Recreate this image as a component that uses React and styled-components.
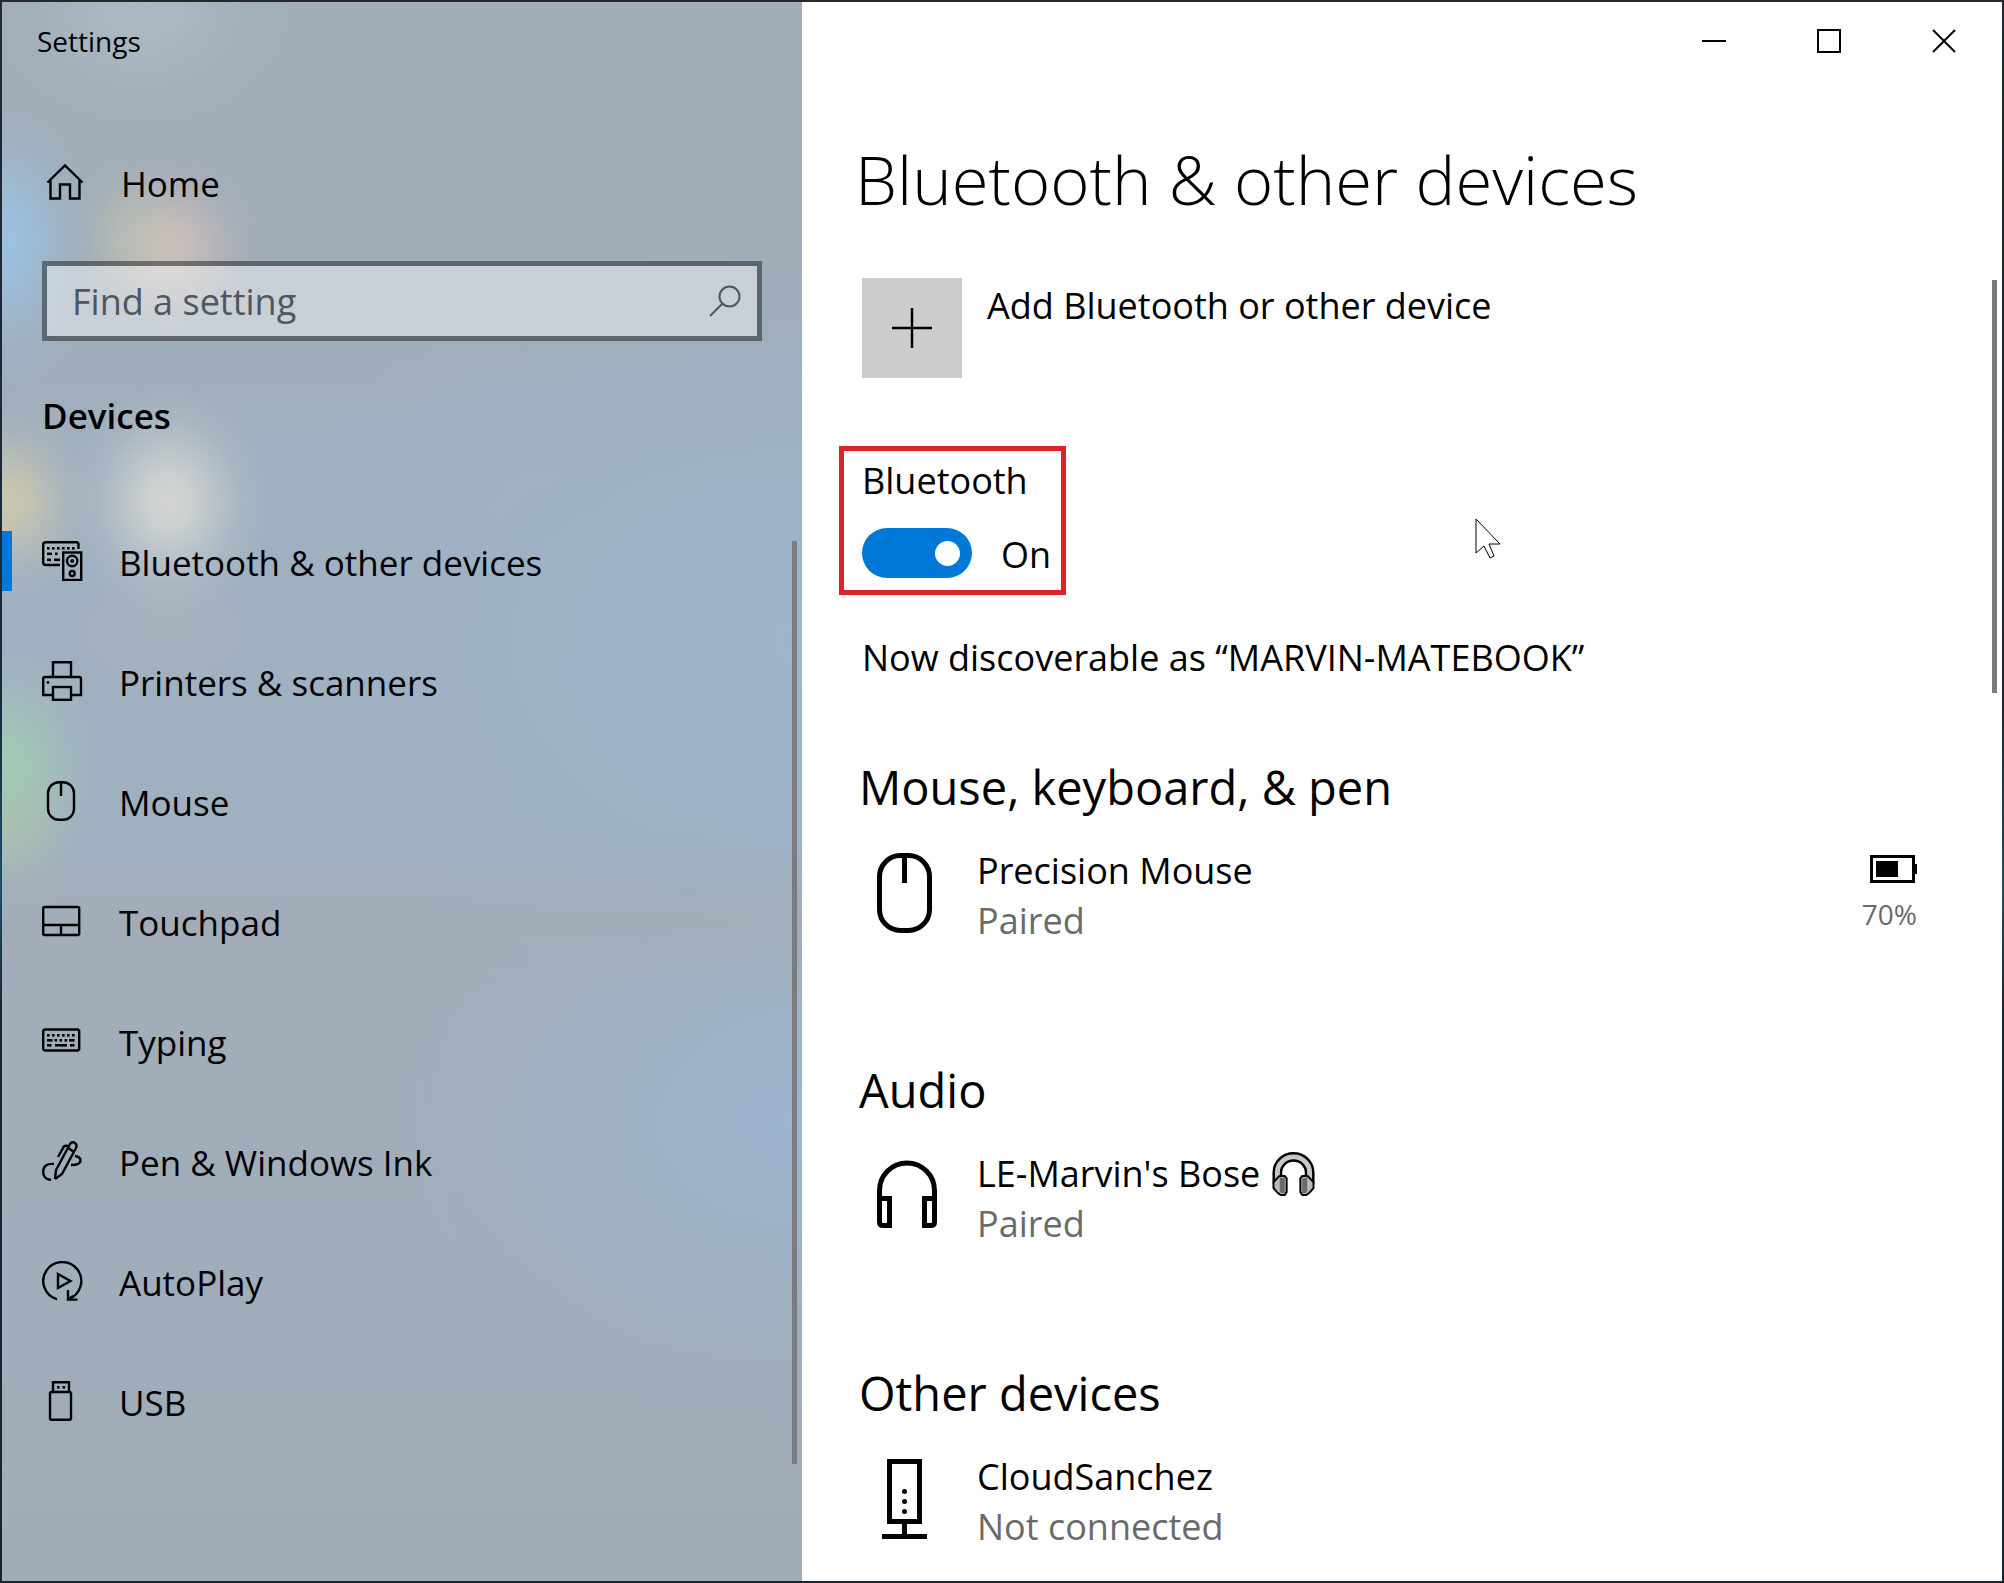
import React, { useState } from "react";
import styled, { createGlobalStyle } from "styled-components";

const GlobalStyle = createGlobalStyle`
  *, *::before, *::after { box-sizing: border-box; }
  body {
    margin: 0;
    font-family: "Open Sans", "Noto Sans", sans-serif;
    font-size: 36px;
    line-height: 50px;
    color: #000;
  }
  h1, h2, p, ul { margin: 0; padding: 0; font-weight: 400; }
  button, input { font: inherit; color: inherit; }
`;

/* ---------- window ---------- */

const Desktop = styled.div`
  min-height: 100vh;
  padding: 2px;
  display: grid;
  background: linear-gradient(#26282c, #1c2836 4%, #1b2a3a 45%, #1d4f66 56%, #1a2532 64%, #1a2532);
`;

const Window = styled.div`
  display: grid;
  grid-template-columns: 40% 1fr;
  background: #fff;
`;

/* ---------- sidebar ---------- */

/* A soft spot of desktop colour showing through the acrylic pane. */
const glow = (size, at, rgb, alpha) =>
  `radial-gradient(ellipse ${size} at ${at}, rgba(${rgb}, ${alpha}), rgba(${rgb}, ${alpha * 0.85}) 22%, rgba(${rgb}, ${alpha * 0.5}) 46%, rgba(${rgb}, ${alpha * 0.18}) 70%, rgba(${rgb}, 0))`;

const Sidebar = styled.aside`
  display: flex;
  flex-direction: column;
  padding-top: 21px;
  background:
    ${glow("100px 150px", "0 240px", "156, 198, 232", 0.85)},
    ${glow("60px 90px", "125px 235px", "190, 198, 176", 0.4)},
    ${glow("95px 95px", "168px 245px", "214, 196, 186", 0.8)},
    ${glow("100px 120px", "167px 500px", "216, 217, 212", 0.9)},
    ${glow("90px 100px", "5px 500px", "210, 203, 172", 0.85)},
    ${glow("95px 120px", "5px 758px", "164, 205, 180", 0.85)},
    ${glow("85px 90px", "5px 825px", "182, 200, 162", 0.5)},
    ${glow("150px 120px", "140px 10px", "182, 193, 204", 0.6)},
    ${glow("130px 80px", "160px 630px", "176, 178, 188", 0.5)},
    linear-gradient(rgba(162, 172, 183, 0), rgba(162, 172, 183, 0.8) 50%, rgba(162, 172, 183, 0)) 0 845px / 100% 150px no-repeat,
    ${glow("560px 420px", "100% 640px", "157, 181, 204", 0.9)},
    ${glow("420px 300px", "100% 1120px", "156, 181, 206", 0.95)},
    linear-gradient(#a1adb8, #a0acb8 18%, #a0b0c0 30%, #9fb0c1 52%, #a1adb9 62%, #a0adba 85%, #a1abb6);
`;

const AppName = styled.p`
  padding-left: 35px;
  font-size: 28px;
  line-height: 36px;
`;

const HomeLink = styled.a`
  display: flex;
  align-items: center;
  gap: 35px;
  height: 80px;
  margin: 83px 40px 0;
  padding-left: 2px;
  color: inherit;
  text-decoration: none;
`;

const LinkText = styled.span`
  padding-top: 4px;
  font-size: 35px;
`;

const SearchBox = styled.form`
  display: flex;
  align-items: center;
  height: 80px;
  margin: 39px 40px 0;
  padding: 0 16px 0 25px;
  border: 5px solid rgba(0, 0, 0, 0.42);
  background: rgba(255, 255, 255, 0.42);
  background-clip: padding-box;
`;

const SearchInput = styled.input`
  flex: 1;
  min-width: 0;
  padding: 2px 0 0;
  border: 0;
  outline: 0;
  background: transparent;
  &::placeholder { color: #50565e; opacity: 1; }
`;

const PlainButton = styled.button`
  display: grid;
  place-items: center;
  padding: 0;
  border: 0;
  background: transparent;
`;

const GroupName = styled.h2`
  margin-top: 50px;
  padding-left: 40px;
  font-size: 35px;
  font-weight: 600;
`;

const NavArea = styled.nav`
  display: grid;
  grid-template-columns: 1fr 5px;
  margin: 60px 5px 0 0;
`;

const NavList = styled.ul`
  list-style: none;
`;

const NavLink = styled.a`
  display: flex;
  align-items: center;
  gap: 35px;
  height: 120px;
  color: inherit;
  text-decoration: none;
  &::before {
    content: "";
    width: 10px;
    height: 60px;
    margin-right: -5px;
    background: ${(p) => (p.$active ? "#0078d7" : "transparent")};
  }
`;

const Thumb = styled.div`
  height: ${(p) => p.$length}px;
  margin-top: ${(p) => p.$start}px;
  background: #7a7c80;
`;

/* ---------- main pane ---------- */

const Main = styled.main`
  display: flex;
  flex-direction: column;
  min-width: 0;
`;

const CaptionBar = styled.div`
  display: flex;
  justify-content: flex-end;
  padding-right: 1px;
`;

const CaptionButton = styled(PlainButton)`
  width: 115px;
  height: 78px;
`;

const PageTitle = styled.h1`
  margin-top: 55px;
  padding-left: 53px;
  font-size: 67px;
  line-height: 88px;
  font-weight: 300;
`;

const ScrollArea = styled.div`
  display: grid;
  grid-template-columns: 1fr 5px;
  margin: 55px 5px 0 0;
`;

const Content = styled.div`
  display: flex;
  flex-direction: column;
  align-items: flex-start;
  padding: 0 75px 28px 60px;
`;

const AddDevice = styled.button`
  display: flex;
  align-items: flex-start;
  gap: 25px;
  padding: 0;
  border: 0;
  background: transparent;
  text-align: left;
`;

const AddLabel = styled.span`
  padding-top: 3px;
`;

const PlusTile = styled.span`
  display: grid;
  place-items: center;
  width: 100px;
  height: 100px;
  background: #ccc;
`;

const Highlight = styled.div`
  margin: 68px 0 0 -23px;
  padding: 5px 10px 12px 18px;
  border: 5px solid #dc2329;
`;

const SwitchRow = styled.div`
  display: flex;
  align-items: center;
  gap: 29px;
  margin-top: 22px;
`;

const SwitchState = styled.span`
  padding-top: 4px;
  line-height: 46px;
`;

const Switch = styled.input`
  appearance: none;
  display: flex;
  align-items: center;
  justify-content: ${(p) => (p.checked ? "flex-end" : "flex-start")};
  width: 110px;
  height: 50px;
  margin: 0;
  padding: 0 12px;
  border-radius: 25px;
  background: ${(p) => (p.checked ? "#0078d7" : "#777")};
  &::before {
    content: "";
    width: 25px;
    height: 25px;
    border-radius: 50%;
    background: #fff;
  }
`;

const Discoverable = styled.p`
  margin: 38px 0 72px;
`;

const Section = styled.section`
  align-self: stretch;
  & + & { margin-top: 112px; }
`;

const SectionTitle = styled.h2`
  margin-left: -3px;
  font-size: 47px;
  line-height: 64px;
`;

const Device = styled.div`
  display: flex;
  align-items: flex-start;
  gap: 31px;
  margin-top: 27px;
`;

const DeviceIcon = styled.svg`
  margin-top: 7px;
  fill: none;
  stroke: #000;
  stroke-width: 5;
`;

const DeviceInfo = styled.div`
  flex: 1;
`;

const DeviceName = styled.p`
  display: flex;
  align-items: center;
  gap: 12px;
`;

const DeviceStatus = styled.p`
  color: #6a6a6a;
`;

const Battery = styled.div`
  display: flex;
  flex-direction: column;
  align-items: flex-end;
  gap: 13px;
  padding-top: 9px;
  font-size: 28px;
  line-height: 36px;
  color: #6a6a6a;
`;

const Pointer = styled.svg`
  position: absolute;
  left: 1475px;
  top: 518px;
  pointer-events: none;
`;

/* ---------- icons ---------- */

const LineIcon = styled.svg`
  flex: none;
  fill: none;
  stroke: #000;
  stroke-width: 2.4;
`;

const Icon = ({ children }) => (
  <LineIcon width="42" height="40" viewBox="0 0 42 40" aria-hidden="true">{children}</LineIcon>
);

const Dots = ({ y, xs, w = 2.6 }) =>
  xs.map((x) => <rect key={x} x={x} y={y} width={w} height="2.6" fill="#000" stroke="none" />);

const BluetoothIcon = () => (
  <Icon>
    <path d="M36.500 8V3.500Q36.500 1.200 34.500 1.200H4Q1.200 1.200 1.200 3.500V21.500Q1.200 24 4 24H18" />
    <Dots y={6} xs={[5, 10, 15, 20, 25, 30]} />
    <Dots y={11.500} xs={[5]} w={5} />
    <Dots y={11.500} xs={[13]} />
    <Dots y={17.500} xs={[5]} w={4} />
    <Dots y={17.500} xs={[12]} w={6} />
    <rect x="21.200" y="11.500" width="18" height="27.500" />
    <circle cx="30.200" cy="20" r="5.200" />
    <circle cx="30.200" cy="20" r="0.800" />
    <circle cx="30.200" cy="32.500" r="2.500" />
  </Icon>
);

const PrinterIcon = () => (
  <Icon>
    <path d="M11 16V1.200H29V16M10 34H1.200V18Q1.200 16 3 16H37Q39 16 39 18V34H29" />
    <rect x="11" y="26" width="18" height="12.800" />
    <circle cx="6" cy="21.500" r="1.400" fill="#000" stroke="none" />
  </Icon>
);

const MouseIcon = () => (
  <Icon>
    <rect x="6" y="1.200" width="26" height="37.600" rx="11" />
    <path d="M19 1V15" />
  </Icon>
);

const TouchpadIcon = () => (
  <Icon>
    <rect x="1.200" y="6" width="36" height="28" rx="1.500" />
    <path d="M1 24H37M19 24V34" />
  </Icon>
);

const TypingIcon = () => (
  <Icon>
    <rect x="1.200" y="8.500" width="36" height="21" rx="2" />
    <Dots y={13} xs={[5, 10, 15, 20, 25, 30]} />
    <Dots y={18} xs={[5, 27]} w={5.500} />
    <Dots y={18} xs={[12.500, 17.500, 22.500]} />
    <Dots y={23} xs={[5, 28]} w={4.500} />
    <Dots y={23} xs={[13]} w={12} />
  </Icon>
);

const PenIcon = () => (
  <Icon>
    <path d="M13 38L14 29L28 3Q30 0 33 2Q35.500 4 34 7L20 33L13 38M25.500 6.500L32 11" />
    <path d="M26 5Q22 4 21 7L16 16" />
    <path d="M12 23Q1.200 22 1.200 31Q1.200 38 9 39" />
    <path d="M33 15Q39 16 38.500 20Q38 24 29 24" />
  </Icon>
);

const AutoPlayIcon = () => (
  <Icon>
    <path d="M15 38.300A19 19 0 1 1 26.500 38" />
    <path d="M26 29V38.600H35.500M26.500 38.500L31 35" />
    <path d="M16 13V27L28.500 20Z" />
  </Icon>
);

const UsbIcon = () => (
  <Icon>
    <path d="M11 11V1.200H27V11" />
    <rect x="8" y="11" width="21" height="27.800" rx="1.500" />
    <Dots y={5} xs={[15, 20.500]} />
  </Icon>
);

const NAV = [
  ["Bluetooth & other devices", BluetoothIcon],
  ["Printers & scanners", PrinterIcon],
  ["Mouse", MouseIcon],
  ["Touchpad", TouchpadIcon],
  ["Typing", TypingIcon],
  ["Pen & Windows Ink", PenIcon],
  ["AutoPlay", AutoPlayIcon],
  ["USB", UsbIcon],
];

const HeadphoneEmoji = () => (
  <svg width="43" height="44" viewBox="0 0 44 45" role="img" aria-label="headphones">
    <path d="M5.500 32V21A16.500 16 0 0 1 38.500 21V32" fill="none" stroke="#000" strokeWidth="10" />
    <path d="M5.500 32V21A16.500 16 0 0 1 38.500 21V32" fill="none" stroke="#c8c8c8" strokeWidth="5" />
    <path d="M7 25L1.500 31V37L6 42L9 44H13L15 41V27L13 24.500H9Z" fill="#b8b8b8" stroke="#000" strokeWidth="2" />
    <path d="M37 25L42.500 31V37L38 42L35 44H31L29 41V27L31 24.500H35Z" fill="#b8b8b8" stroke="#000" strokeWidth="2" />
    <path d="M8 26.500H13V42H9.500L8 40ZM36 26.500H31V42H34.500L36 40Z" fill="#6a6a6a" />
  </svg>
);

const DeviceEntry = ({ icon, name, status, emoji, children }) => (
  <Device>
    <DeviceIcon width="84" height="80" viewBox="0 0 84 80" aria-hidden="true">{icon}</DeviceIcon>
    <DeviceInfo>
      <DeviceName>{name}{emoji}</DeviceName>
      <DeviceStatus>{status}</DeviceStatus>
    </DeviceInfo>
    {children}
  </Device>
);

export default function App() {
  const [on, setOn] = useState(true);
  return (
    <Desktop>
      <GlobalStyle />
      <Window>
        <Sidebar>
          <AppName>Settings</AppName>
          <HomeLink href="#home">
            <LineIcon width="42" height="40" viewBox="0 0 42 40" aria-hidden="true">
              <path d="M3.500 20.500L21 3.500L38.500 20.500M6.500 18V36.500H16V22.500H26V36.500H35.500V18" />
            </LineIcon>
            <LinkText>Home</LinkText>
          </HomeLink>
          <SearchBox role="search" onSubmit={(e) => e.preventDefault()}>
            <SearchInput type="text" placeholder="Find a setting" aria-label="Find a setting" />
            <PlainButton type="submit" aria-label="Search">
              <svg width="32" height="32" viewBox="0 0 32 32" fill="none" stroke="#50565e" strokeWidth="2">
                <circle cx="20.500" cy="11.500" r="10" />
                <path d="M13.500 18.500L1 31" />
              </svg>
            </PlainButton>
          </SearchBox>
          <GroupName>Devices</GroupName>
          <NavArea aria-label="Devices">
            <NavList>
              {NAV.map(([label, Glyph], i) => (
                <li key={label}>
                  <NavLink href={`#${i}`} $active={i === 0} aria-current={i === 0 ? "page" : undefined}>
                    <Glyph />
                    <LinkText>{label}</LinkText>
                  </NavLink>
                </li>
              ))}
            </NavList>
            <Thumb $start={40} $length={923} />
          </NavArea>
        </Sidebar>
        <Main>
          <CaptionBar>
            <CaptionButton aria-label="Minimize">
              <svg width="24" height="24"><path d="M0 12H24" stroke="#000" strokeWidth="2" /></svg>
            </CaptionButton>
            <CaptionButton aria-label="Maximize">
              <svg width="24" height="24"><path d="M1 1H23V23H1Z" fill="none" stroke="#000" strokeWidth="2" /></svg>
            </CaptionButton>
            <CaptionButton aria-label="Close">
              <svg width="24" height="24"><path d="M1 1L23 23M23 1L1 23" stroke="#000" strokeWidth="2" /></svg>
            </CaptionButton>
          </CaptionBar>
          <PageTitle>Bluetooth &amp; other devices</PageTitle>
          <ScrollArea>
            <Content>
              <AddDevice>
                <PlusTile>
                  <svg width="40" height="40"><path d="M20 0V40M0 20H40" stroke="#000" strokeWidth="2.500" /></svg>
                </PlusTile>
                <AddLabel>Add Bluetooth or other device</AddLabel>
              </AddDevice>
              <Highlight>
                <label htmlFor="bluetooth">Bluetooth</label>
                <SwitchRow>
                  <Switch id="bluetooth" type="checkbox" role="switch" checked={on} onChange={() => setOn(!on)} />
                  <SwitchState>{on ? "On" : "Off"}</SwitchState>
                </SwitchRow>
              </Highlight>
              <Discoverable>Now discoverable as “MARVIN-MATEBOOK”</Discoverable>
              <Section>
                <SectionTitle>Mouse, keyboard, &amp; pen</SectionTitle>
                <DeviceEntry
                  name="Precision Mouse"
                  status="Paired"
                  icon={<><rect x="17.500" y="2.500" width="50" height="75" rx="21" /><path d="M42.500 2V30" /></>}
                >
                  <Battery>
                    <svg width="48" height="28" viewBox="0 0 48 28" aria-hidden="true">
                      <path d="M2.500 1.500H44.500V26.500H2.500Z" fill="none" stroke="#000" strokeWidth="3" />
                      <path d="M7 6H29V22H7ZM45 9H48V19H45Z" fill="#000" />
                    </svg>
                    <span>70%</span>
                  </Battery>
                </DeviceEntry>
              </Section>
              <Section>
                <SectionTitle>Audio</SectionTitle>
                <DeviceEntry
                  name="LE-Marvin's Bose"
                  status="Paired"
                  emoji={<HeadphoneEmoji />}
                  icon={
                    <>
                      <path d="M17.500 46V34.500A27.500 27.500 0 0 1 72.500 34.500V46" />
                      <path d="M17.500 42.500H27.500V69.500H21Q17.500 69.500 17.500 66ZM72.500 42.500H62.500V69.500H69Q72.500 69.500 72.500 66Z" />
                    </>
                  }
                />
              </Section>
              <Section>
                <SectionTitle>Other devices</SectionTitle>
                <DeviceEntry
                  name="CloudSanchez"
                  status="Not connected"
                  icon={
                    <>
                      <path d="M27.500 2.500H57.500V62.500H27.500ZM42.500 63V77M20 77.500H65" />
                      <g fill="#000" stroke="none">
                        <circle cx="42.500" cy="32.500" r="2.500" />
                        <circle cx="42.500" cy="42.500" r="2.500" />
                        <circle cx="42.500" cy="52.500" r="2.500" />
                      </g>
                    </>
                  }
                />
              </Section>
            </Content>
            <Thumb $start={2} $length={413} />
          </ScrollArea>
        </Main>
      </Window>
      <Pointer width="27" height="42" viewBox="0 0 27 42" aria-hidden="true">
        <path d="M1 1V35L9 28L15 40L19 38L14 26H25Z" fill="#fff" stroke="#000" strokeWidth="1" />
      </Pointer>
    </Desktop>
  );
}
